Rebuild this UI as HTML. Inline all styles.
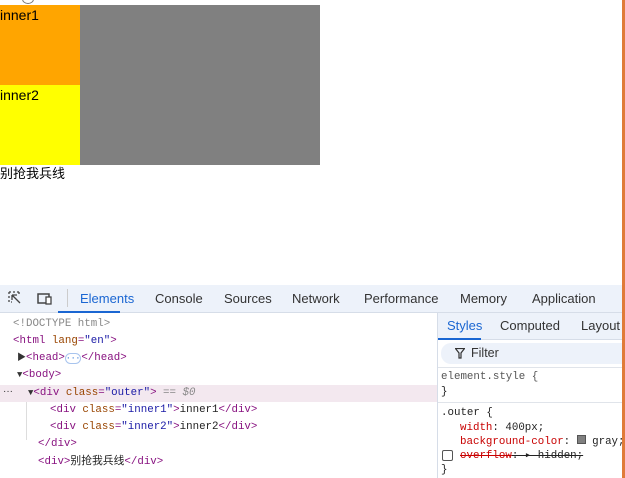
<!DOCTYPE html>
<html><head><meta charset="utf-8"><style>
*{margin:0;padding:0;box-sizing:border-box}
body{width:625px;height:478px;overflow:hidden;background:#fff;position:relative;font-family:"Liberation Sans","Noto Sans CJK SC",sans-serif;}
.abs{position:absolute}
.mono{font-family:"Liberation Mono","Noto Sans CJK SC",monospace;font-size:10.8px;white-space:pre}
.ln{position:absolute;font-family:"Liberation Mono","Noto Sans CJK SC",monospace;font-size:10.8px;white-space:pre;line-height:14px;color:#222}
.tag{color:#881280}.attr{color:#994500}.val{color:#1a1aa6}
.tab{position:absolute;top:291px;font-size:13px;color:#333}
.ar{font-size:9px;color:#333}
</style></head><body>
<div class="abs" style="left:0;top:5px;width:320px;height:160px;background:#808080"></div>
<div class="abs" style="left:0;top:5px;width:80px;height:80px;background:#ffa500;font-size:14px;line-height:20px;">inner1</div>
<div class="abs" style="left:0;top:85px;width:80px;height:80px;background:#ff0;font-size:14px;line-height:20px;">inner2</div>
<div class="abs" style="left:0;top:165px;font-size:13px;line-height:18px;">别抢我兵线</div>
<div class="abs" style="left:22px;top:-6px;width:12px;height:10px;border:1px solid #777;border-radius:50%"></div>

<div class="abs" style="left:0;top:285px;width:622px;height:28px;background:#edf2fa;border-bottom:1px solid #d6dde8"></div>
<svg class="abs" style="left:8px;top:291px" width="45" height="16"><path d="M1 1h2M5 1h2M9 1h2M1 1v2M1 5v2M1 9v2M11 1v2M3 11h1M4 4l8 8M4 4h5M4 4v5" stroke="#444" fill="none" stroke-width="1.3"/><rect x="30" y="3" width="11" height="9" fill="none" stroke="#444" stroke-width="1.5"/><rect x="38" y="6" width="5" height="7" fill="#fff" stroke="#444" stroke-width="1.3"/></svg>
<div class="abs" style="left:67px;top:289px;width:1px;height:18px;background:#ccc"></div>
<div class="tab" style="left:80px;color:#1a66d2">Elements</div>
<div class="abs" style="left:58px;top:311px;width:62px;height:2px;background:#1a66d2"></div>
<div class="tab" style="left:155px">Console</div>
<div class="tab" style="left:224px">Sources</div>
<div class="tab" style="left:292px">Network</div>
<div class="tab" style="left:364px">Performance</div>
<div class="tab" style="left:460px">Memory</div>
<div class="tab" style="left:532px">Application</div>

<div class="abs" style="left:437px;top:313px;width:1px;height:165px;background:#d6dde8"></div>
<div class="abs" style="left:438px;top:313px;width:184px;height:27px;background:#edf2fa;border-bottom:1px solid #d6dde8"></div>
<div class="abs" style="left:447px;top:318px;font-size:13px;color:#1a66d2">Styles</div>
<div class="abs" style="left:438px;top:338px;width:43px;height:2px;background:#1a66d2"></div>
<div class="abs" style="left:500px;top:318px;font-size:13px;color:#333">Computed</div>
<div class="abs" style="left:581px;top:318px;font-size:13px;color:#333">Layout</div>
<div class="abs" style="left:441px;top:343px;width:181px;height:21px;background:#edf2fa;border-radius:10px 0 0 10px"></div>
<svg class="abs" style="left:455px;top:348px" width="10" height="11"><path d="M0.5 0.5h9L6 5v5H4V5z" fill="none" stroke="#333" stroke-width="1.2"/></svg>
<div class="abs" style="left:471px;top:346px;font-size:12.5px;color:#333">Filter</div>
<div class="abs" style="left:438px;top:367px;width:184px;height:1px;background:#e0e4ea"></div>
<div class="ln" style="left:441px;top:370px;color:#555">element.style {</div>
<div class="ln" style="left:441px;top:385px">}</div>
<div class="abs" style="left:438px;top:402px;width:184px;height:1px;background:#e0e4ea"></div>
<div class="ln" style="left:441px;top:406px">.outer {</div>
<div class="ln" style="left:460px;top:421px"><span style="color:#c80000">width</span>: 400px;</div>
<div class="ln" style="left:460px;top:435px"><span style="color:#c80000">background-color</span>: <span style="display:inline-block;width:9px;height:9px;background:#808080;border:1px solid #555"></span> gray;</div>
<div class="ln" style="left:460px;top:449px"><span style="color:#c80000;text-decoration:line-through">overflow</span><span style="text-decoration:line-through">: ▸ hidden;</span></div>
<div class="ln" style="left:441px;top:463px">}</div>
<div class="abs" style="left:442px;top:450px;width:11px;height:11px;border:1px solid #555;border-radius:2px;background:#fff"></div>

<div class="abs" style="left:0;top:385px;width:437px;height:17px;background:#f3e8ef"></div>
<div class="abs" style="left:26px;top:402px;width:1px;height:38px;background:#ddd"></div>
<div class="ln" style="left:13px;top:317px;color:#888">&lt;!DOCTYPE html&gt;</div>
<div class="ln" style="left:13px;top:334px"><span class="tag">&lt;html <span class="attr">lang</span>=<span class="val">"en"</span>&gt;</span></div>
<div class="ln" style="left:17px;top:351px"><span class="ar">▶</span><span class="tag">&lt;head&gt;</span><span style="color:#1a66d2;border:1px solid #a8c4ee;border-radius:6px;font-size:8px">···</span><span class="tag">&lt;/head&gt;</span></div>
<div class="ln" style="left:17px;top:368px"><span class="ar">▼</span><span class="tag">&lt;body&gt;</span></div>
<div class="ln" style="left:28px;top:386px"><span class="ar">▼</span><span class="tag">&lt;div <span class="attr">class</span>=<span class="val">"outer"</span>&gt;</span> <span style="color:#888;font-style:italic">== $0</span></div>
<div class="ln" style="left:50px;top:403px"><span class="tag">&lt;div <span class="attr">class</span>=<span class="val">"inner1"</span>&gt;</span>inner1<span class="tag">&lt;/div&gt;</span></div>
<div class="ln" style="left:50px;top:420px"><span class="tag">&lt;div <span class="attr">class</span>=<span class="val">"inner2"</span>&gt;</span>inner2<span class="tag">&lt;/div&gt;</span></div>
<div class="ln" style="left:38px;top:437px"><span class="tag">&lt;/div&gt;</span></div>
<div class="ln" style="left:38px;top:455px"><span class="tag">&lt;div&gt;</span>别抢我兵线<span class="tag">&lt;/div&gt;</span></div>
<div class="abs" style="left:3px;top:386px;font-size:10px;color:#333">···</div>
<div class="abs" style="left:622px;top:0;width:3px;height:478px;background:#e07b39"></div>
</body></html>
